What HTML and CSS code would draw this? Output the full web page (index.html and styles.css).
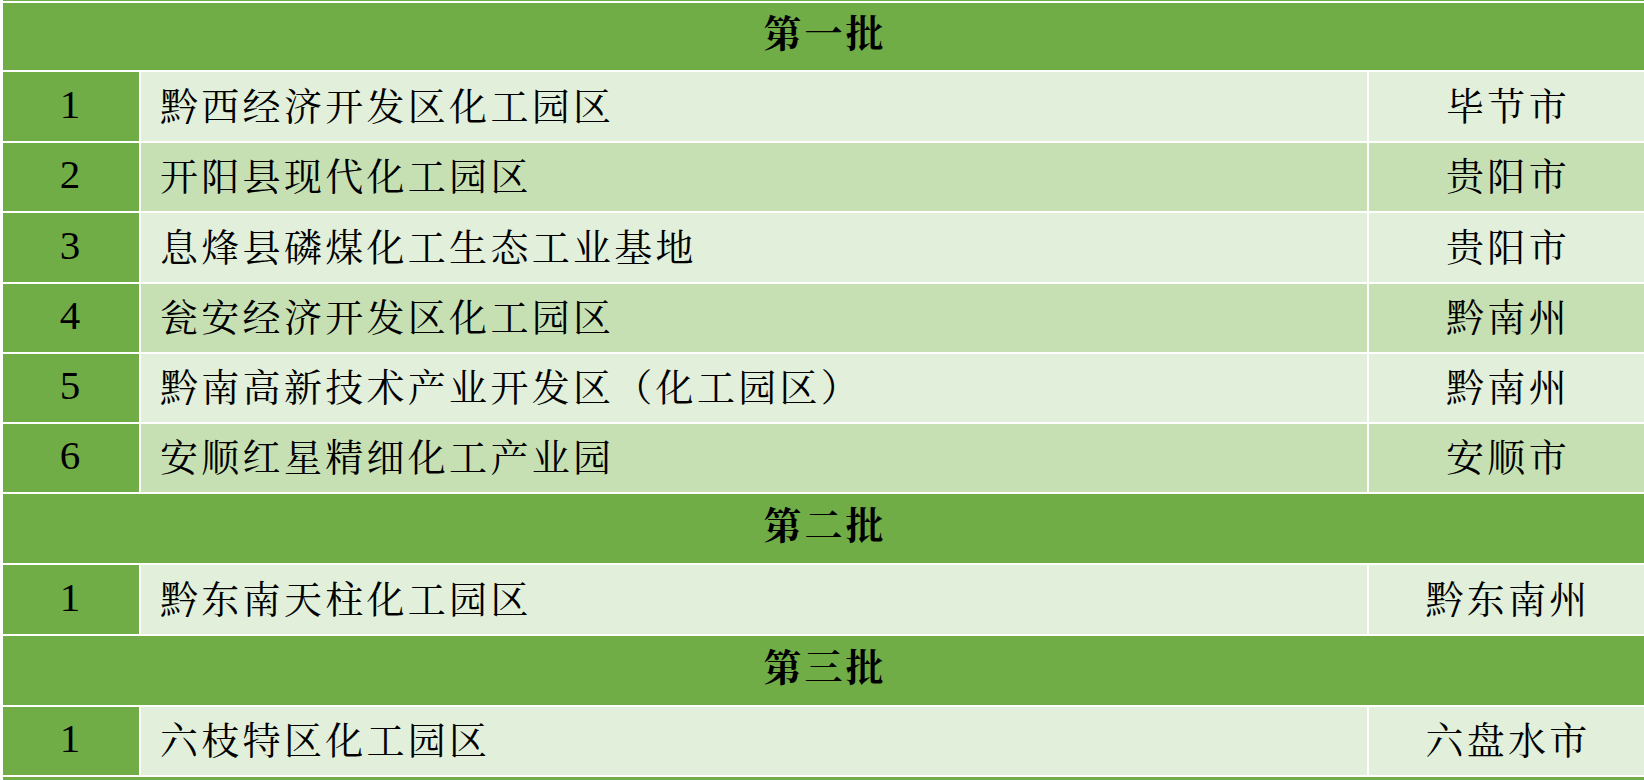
FILE: index.html
```html
<!DOCTYPE html>
<html lang="zh-CN">
<head>
<meta charset="utf-8">
<title>化工园区名单</title>
<link rel="stylesheet" href="styles.css">
</head>
<body>
<div class="sheet">
  <div class="edge"></div>

  <div class="batch">第一批</div>
  <div class="num">1</div><div class="name light">黔西经济开发区化工园区</div><div class="city light">毕节市</div>
  <div class="num">2</div><div class="name alt">开阳县现代化工园区</div><div class="city alt">贵阳市</div>
  <div class="num">3</div><div class="name light">息烽县磷煤化工生态工业基地</div><div class="city light">贵阳市</div>
  <div class="num">4</div><div class="name alt">瓮安经济开发区化工园区</div><div class="city alt">黔南州</div>
  <div class="num">5</div><div class="name light">黔南高新技术产业开发区（化工园区）</div><div class="city light">黔南州</div>
  <div class="num">6</div><div class="name alt">安顺红星精细化工产业园</div><div class="city alt">安顺市</div>

  <div class="batch">第二批</div>
  <div class="num">1</div><div class="name light">黔东南天柱化工园区</div><div class="city light">黔东南州</div>

  <div class="batch">第三批</div>
  <div class="num">1</div><div class="name light">六枝特区化工园区</div><div class="city light">六盘水市</div>

  <div class="edge bottom"></div>
</div>
</body>
</html>
```

FILE: styles.css
```css
html, body {
  margin: 0;
  padding: 0;
  background: #ffffff;
}

body {
  width: 1644px;
  height: 780px;
  overflow: hidden;
}

.sheet {
  display: grid;
  grid-template-columns: 136px 1226px 275px;
  grid-template-rows: 1px 67px 69px 68px 69px 68px 68px 68px 69px 69px 69px 68px 3px;
  column-gap: 2px;
  row-gap: 2px;
  padding-left: 3px;
  font-family: "Noto Serif CJK SC", "Noto Sans CJK SC", serif;
  color: #000000;
}

.edge {
  grid-column: 1 / -1;
  background: #70ad47;
}

.batch {
  grid-column: 1 / -1;
  background: #70ad47;
  display: flex;
  align-items: center;
  justify-content: center;
  padding-bottom: 12px;
  padding-left: 3px;
  box-sizing: border-box;
  font-size: 38px;
  font-weight: 700;
  letter-spacing: 3px;
}

.num {
  background: #70ad47;
  display: flex;
  align-items: center;
  justify-content: center;
  padding-bottom: 6px;
  padding-right: 2px;
  box-sizing: border-box;
  font-family: "Liberation Serif", "Times New Roman", serif;
  font-size: 41px;
}

.name,
.city {
  display: flex;
  align-items: center;
  padding-bottom: 7px;
  box-sizing: border-box;
  font-size: 38px;
  letter-spacing: 3.3px;
  white-space: nowrap;
}

.name {
  padding-left: 19px;
}

.city {
  justify-content: center;
  padding-left: 3px;
}

.light {
  background: #e2efda;
}

.alt {
  background: #c6e0b4;
}
```
